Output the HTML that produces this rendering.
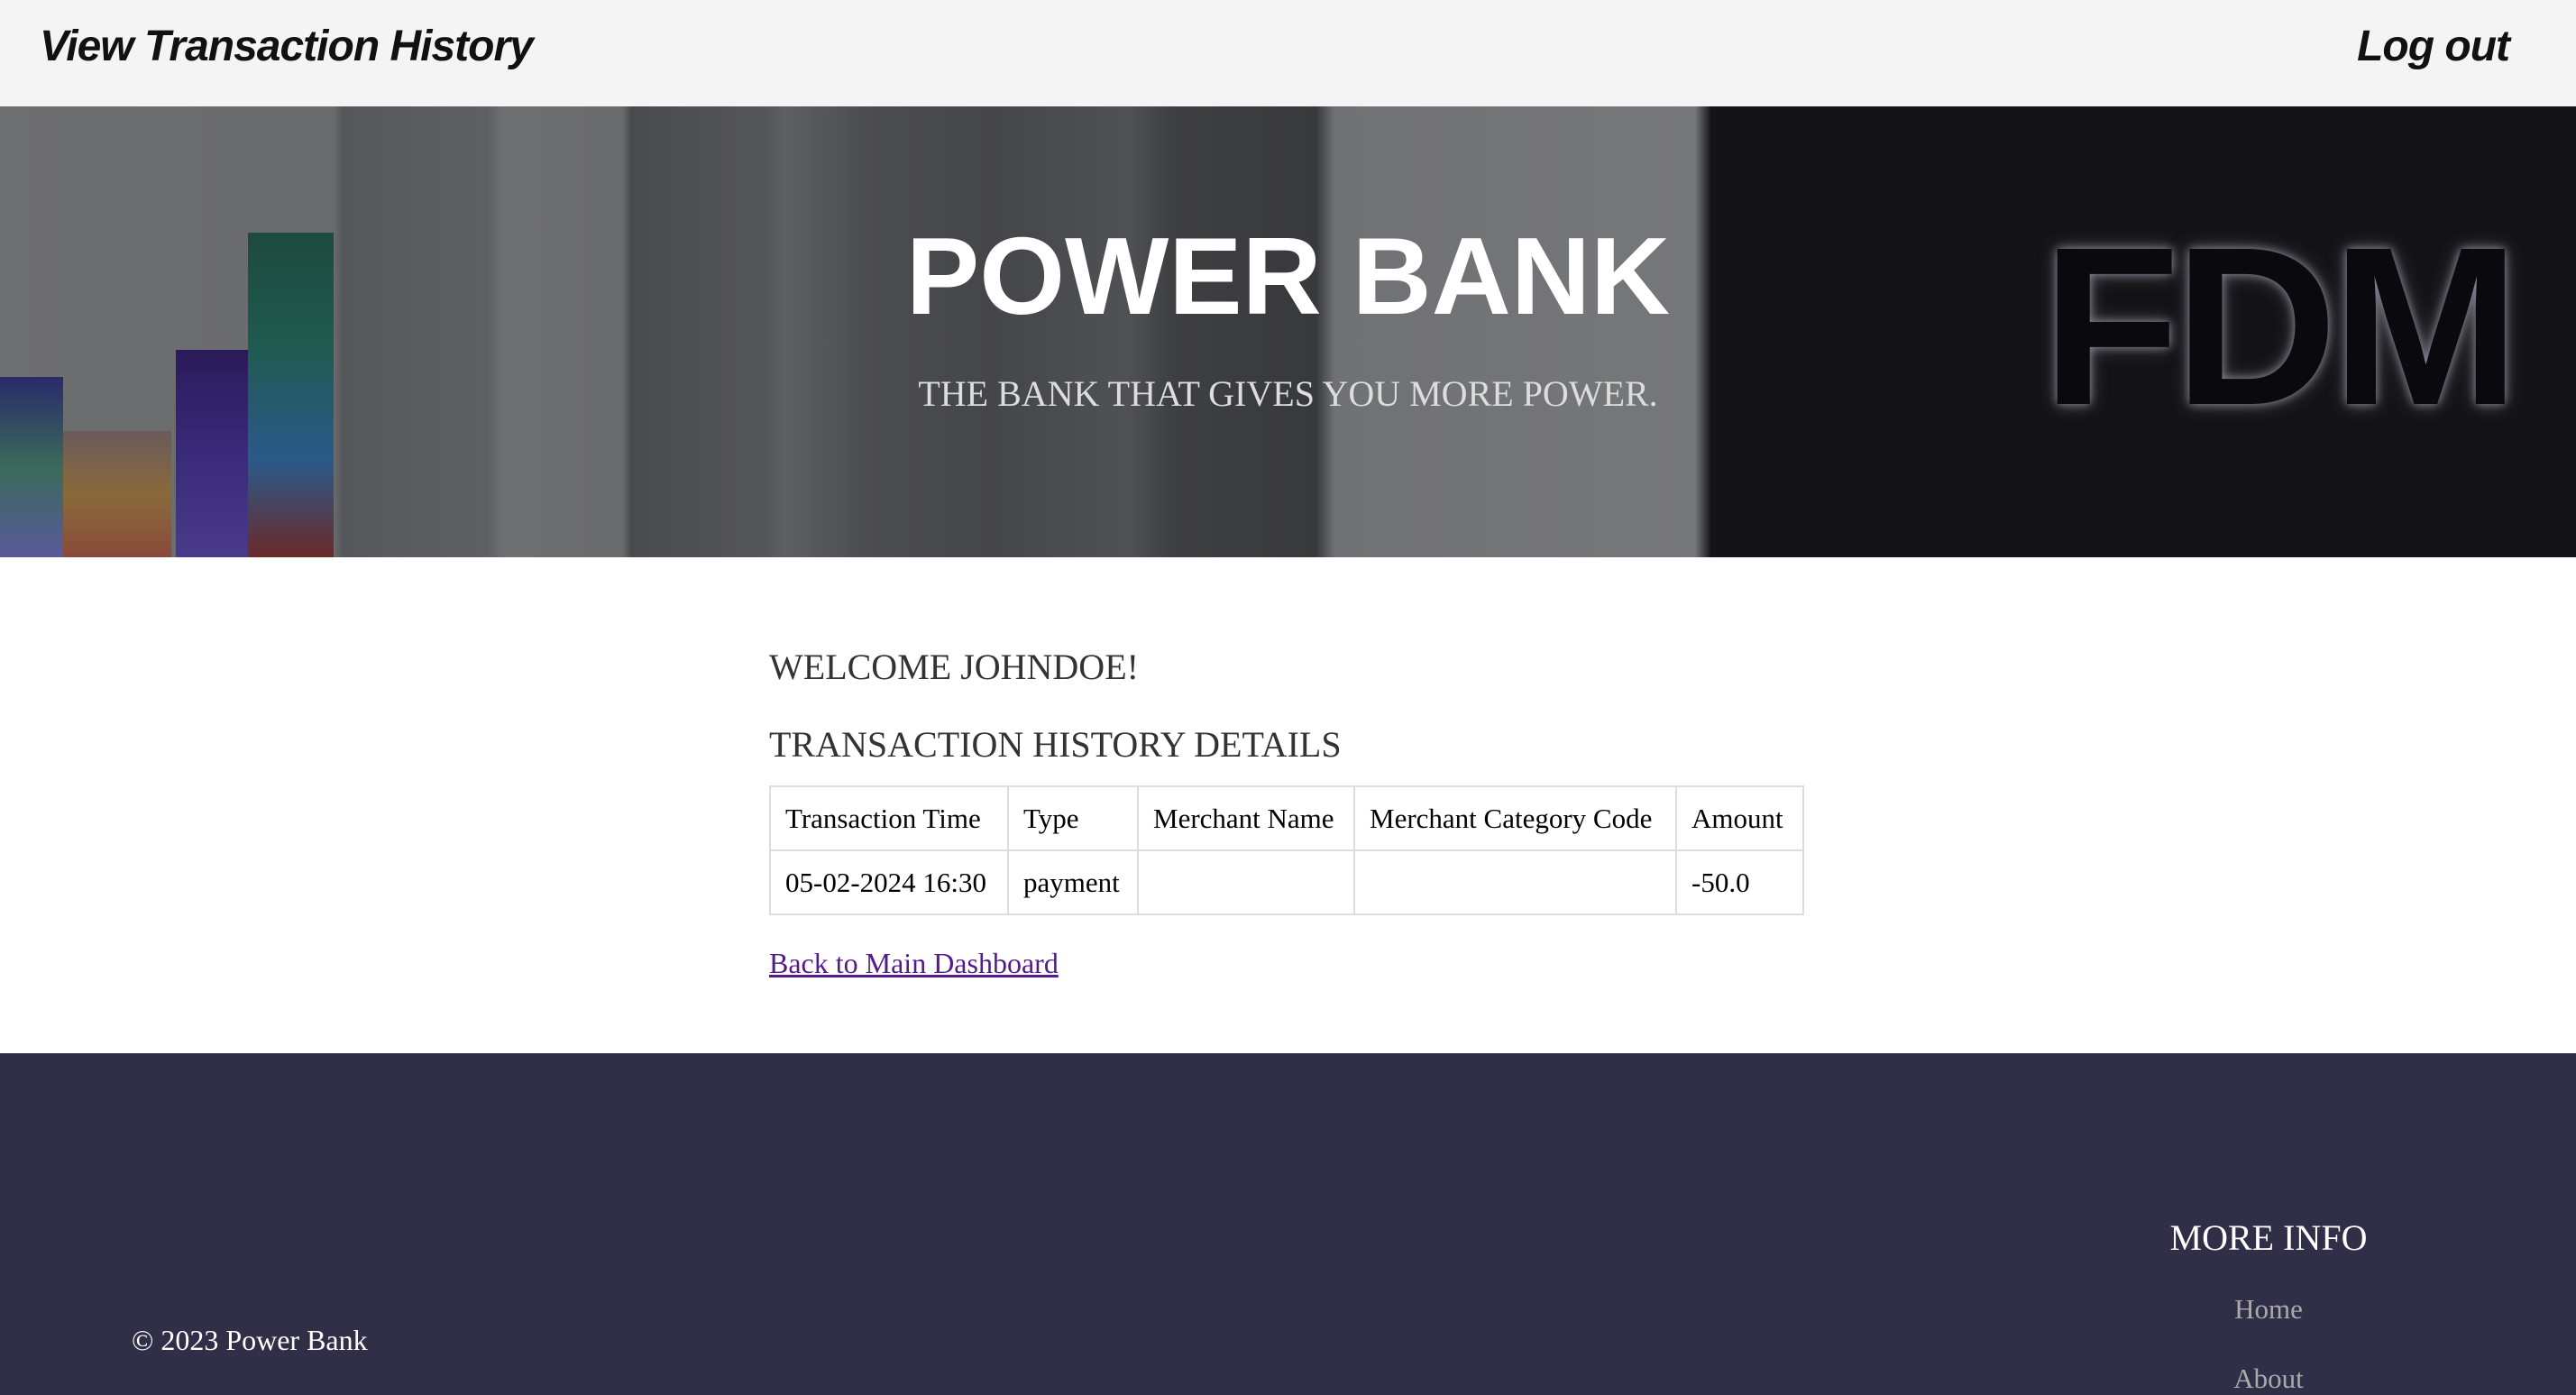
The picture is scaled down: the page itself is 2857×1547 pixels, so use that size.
<!DOCTYPE html>
<html><head><meta charset="utf-8"><style>
*{margin:0;padding:0;box-sizing:border-box}
body{width:2857px;height:1547px;overflow:hidden;background:#fff;font-family:"Liberation Serif",serif;position:relative}
.a{position:absolute;white-space:nowrap}
nav{position:absolute;left:0;top:0;width:2857px;height:118px;background:#f4f4f4}
.nav{font-family:"Liberation Sans",sans-serif;font-style:italic;font-weight:bold;font-size:48px;color:#111;letter-spacing:-1px}
.hero{position:absolute;left:0;top:118px;width:2857px;height:500px;overflow:hidden;
background:linear-gradient(90deg,#6e6f71 0,#6a6b6d 370px,#55575b 380px,#5e6064 540px,#6f7072 560px,#6a6b6d 690px,#4a4b4e 700px,#55565a 850px,#5e5f62 870px,#4c4d50 960px,#45464a 1100px,#505155 1250px,#3e3f42 1300px,#38393c 1460px,#707174 1480px,#76777a 1880px,#141318 1898px,#141318 2857px)}
table{border-collapse:collapse;position:absolute;left:853px;top:871px;font-size:31px;color:#000}
td,th{border:2px solid #ddd;height:71px;padding:0 16px;font-weight:normal;text-align:left}
footer{position:absolute;left:0;top:1168px;width:2857px;height:379px;background:#312f48}
</style></head><body>
<nav>
<div class="a nav" style="left:44px;top:24px">View Transaction History</div>
<div class="a nav" style="right:74px;top:24px">Log out</div>
</nav>
<div class="hero">
<div class="a" style="left:0;top:300px;width:70px;height:200px;background:linear-gradient(180deg,#2a2a6a,#3a6a5a,#5a5a9a)"></div>
<div class="a" style="left:70px;top:360px;width:120px;height:140px;background:linear-gradient(180deg,#6a5a5a,#8a6a3a,#8a4a3a)"></div>
<div class="a" style="left:195px;top:270px;width:80px;height:230px;background:linear-gradient(180deg,#2a1a5a,#3a2a7a,#4a3a8a)"></div>
<div class="a" style="left:275px;top:140px;width:95px;height:360px;background:linear-gradient(180deg,#1e4a3e,#1f5a50,#2a5a8a 70%,#6a2a2a)"></div>
<div class="a" style="left:2265px;top:100px;font:bold 250px 'Liberation Sans',sans-serif;color:#0a0a0e;text-shadow:0 0 10px #8a8aa0,0 0 20px #555;letter-spacing:-6px">FDM</div>
<div class="a" style="left:0;top:118px;width:2857px;text-align:center;font:bold 122px 'Liberation Sans',sans-serif;color:#fff">POWER BANK</div>
<div class="a" style="left:0;top:295px;width:2857px;text-align:center;font-size:40px;color:#ddd">THE BANK THAT GIVES YOU MORE POWER.</div>
</div>
<div class="a" style="left:853px;top:716px;font-size:40px;color:#333">WELCOME JOHNDOE!</div>
<div class="a" style="left:853px;top:802px;font-size:40px;color:#333">TRANSACTION HISTORY DETAILS</div>
<table>
<tr><th style="width:264px">Transaction Time</th><th style="width:144px">Type</th><th style="width:240px">Merchant Name</th><th style="width:357px">Merchant Category Code</th><th style="width:141px">Amount</th></tr>
<tr><td>05-02-2024 16:30</td><td>payment</td><td></td><td></td><td>-50.0</td></tr>
</table>
<a class="a" style="left:853px;top:1050px;font-size:32px;color:#551a8b;text-decoration:underline">Back to Main Dashboard</a>
<footer>
<div class="a" style="left:146px;top:300px;font-size:32px;color:#fff">© 2023 Power Bank</div>
<div class="a" style="left:2316px;width:400px;text-align:center;top:181px;font-size:40px;color:#fff">MORE INFO</div>
<div class="a" style="left:2316px;width:400px;text-align:center;top:266px;font-size:31px;color:#aaa">Home</div>
<div class="a" style="left:2316px;width:400px;text-align:center;top:343px;font-size:31px;color:#aaa">About</div>
</footer>
</body></html>
